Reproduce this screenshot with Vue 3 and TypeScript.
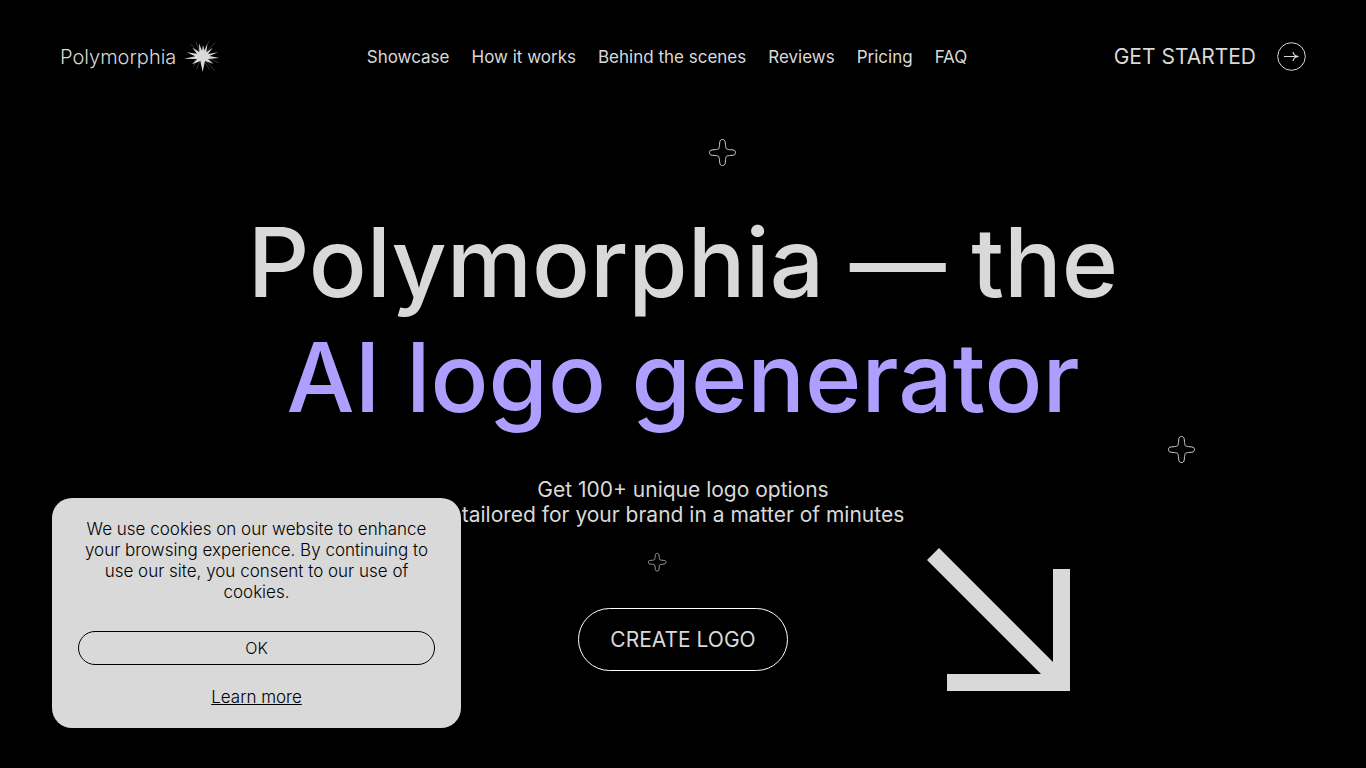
<script setup lang="ts">
import { ref } from 'vue'

const links: string[] = ['Showcase', 'How it works', 'Behind the scenes', 'Reviews', 'Pricing', 'FAQ']
const sparks: string[] = ['spark-top', 'spark-right', 'spark-small']
const cookiesOpen = ref(true)
</script>

<template>
  <div class="page">
    <header class="header">
      <a class="brand" href="#">
        <span>Polymorphia</span>
        <svg class="brand-star" viewBox="0 0 108 102" aria-hidden="true">
          <path
            d="M52 47 35 4M52 47 75 4M52 47 20 12M52 47 94 8M52 47 92 92M52 47 27 80M52 47 76 88M52 47 104 68M52 47 38 88"
            stroke="#555"
            stroke-width="2"
          />
          <path
            d="M45 10 54 32 57 14 61 32 70 12 67 37 86 23 72 42 102 37 76 48 106 54 72 57 88 71 63 63 56 96 49 63 24 73 39 57 0 56 34 49 8 37 39 41 25 23 46 36Z"
            fill="#d9d9d9"
          />
        </svg>
      </a>
      <nav class="nav" aria-label="Main">
        <a v-for="link in links" :key="link" href="#">{{ link }}</a>
      </nav>
      <a class="start" href="#">
        <span>GET STARTED</span>
        <svg class="start-icon" viewBox="0 0 30 30" fill="none" stroke="#d9d9d9" aria-hidden="true">
          <circle cx="15.5" cy="14.5" r="13.8" />
          <path d="M8 14.5H22.5M17 10C17.4 12.5 19.4 14.2 22.5 14.5C19.4 14.8 17.4 16.5 17 19" stroke-width="1.2" />
        </svg>
      </a>
    </header>

    <main class="hero">
      <svg v-for="name in sparks" :key="name" class="spark" :class="name" viewBox="0 0 28 28" aria-hidden="true">
        <path
          d="M13.5 .5C15.3 .5 16.1 1.5 16.3 3.7C16.6 8.4 17.1 9.5 17.4 9.8C17.7 10.1 18.8 10.6 23.5 10.9C25.7 11.1 26.5 11.9 26.5 13.5S25.7 16.1 23.5 16.3C18.8 16.6 17.7 17.1 17.4 17.4C17.1 17.7 16.6 18.8 16.3 23.5C16.1 25.7 15.3 26.5 13.5 26.5S10.9 25.7 10.7 23.5C10.4 18.8 9.9 17.7 9.6 17.4C9.3 17.1 8.2 16.6 3.5 16.3C1.3 16.1 .5 15.3 .5 13.5S1.3 11.1 3.5 10.9C8.2 10.6 9.3 10.1 9.6 9.8C9.9 9.5 10.4 8.4 10.7 3.7C10.9 1.5 11.7 .5 13.5 .5Z"
        />
      </svg>
      <h1>Polymorphia — the<br /><span class="accent">AI logo generator</span></h1>
      <p class="lead">Get 100+ unique logo options<br />tailored for your brand in a matter of minutes</p>
      <button class="create" type="button">CREATE LOGO</button>
      <svg class="arrow" viewBox="0 0 143 143" fill="#d9d9d9" aria-hidden="true">
        <path d="M0 12 12 0 126 114V21H143V143H20V126H114Z" />
      </svg>
    </main>

    <aside v-if="cookiesOpen" class="cookies" aria-label="Cookie notice">
      <p>We use cookies on our website to enhance your browsing experience. By continuing to use our site, you consent to our use of cookies.</p>
      <button type="button" @click="cookiesOpen = false">OK</button>
      <a href="#">Learn more</a>
    </aside>
  </div>
</template>

<style>
body {
  margin: 0;
  background: #000;
}
</style>

<style scoped>
.page {
  min-height: 100vh;
  overflow: hidden;
  background: #000;
  color: #d9d9d9;
  font-family: Inter, sans-serif;
}
a {
  color: inherit;
  text-decoration: none;
}
button {
  font: inherit;
  color: inherit;
  background: transparent;
  cursor: pointer;
}
.header {
  display: flex;
  align-items: center;
  justify-content: space-between;
  height: 113px;
  padding: 0 60px;
}
.brand {
  display: flex;
  align-items: center;
  gap: 8px;
  font-size: 20px;
  font-weight: 300;
}
.brand-star {
  width: 36px;
  height: 34px;
  fill: none;
}
.nav {
  display: flex;
  gap: 22px;
  font-size: 17px;
}
.start {
  display: flex;
  align-items: center;
  gap: 20px;
  font-size: 21px;
}
.start-icon {
  width: 30px;
  height: 30px;
}
.hero {
  position: relative;
  display: flex;
  flex-direction: column;
  align-items: center;
  padding-top: 92px;
  text-align: center;
}
h1 {
  margin: 0;
  font-size: 96px;
  font-weight: 500;
  line-height: 115px;
}
.accent {
  color: #ae9eff;
}
.lead {
  margin: 42px 0 0;
  font-size: 21px;
  line-height: 25px;
}
.create {
  margin-top: 81px;
  padding: 0 31px;
  height: 63px;
  border: 1px solid #fff;
  border-radius: 32px;
  font-size: 21px;
}
.spark {
  position: absolute;
  width: 28px;
  height: 28px;
  fill: none;
  stroke: #d9d9d9;
}
.spark-top {
  top: 26px;
  left: calc(50% + 26px);
}
.spark-right {
  top: 323px;
  left: calc(50% + 485px);
}
.spark-small {
  top: 440px;
  left: calc(50% - 35px);
  width: 19px;
  height: 19px;
}
.arrow {
  position: absolute;
  top: 435px;
  left: calc(50% + 244px);
  width: 143px;
  height: 143px;
}
.cookies {
  position: fixed;
  left: 52px;
  bottom: 40px;
  box-sizing: border-box;
  width: 409px;
  padding: 21px 26px 20px;
  display: flex;
  flex-direction: column;
  align-items: center;
  border-radius: 20px;
  background: #d9d9d9;
  color: #000;
  font-size: 17px;
  font-weight: 300;
  line-height: 21px;
  text-align: center;
}
.cookies p {
  margin: 0 0 28px;
}
.cookies button {
  align-self: stretch;
  height: 34px;
  margin-bottom: 22px;
  border: 1px solid #000;
  border-radius: 17px;
  font-size: 16px;
}
.cookies a {
  text-decoration: underline;
}
</style>
